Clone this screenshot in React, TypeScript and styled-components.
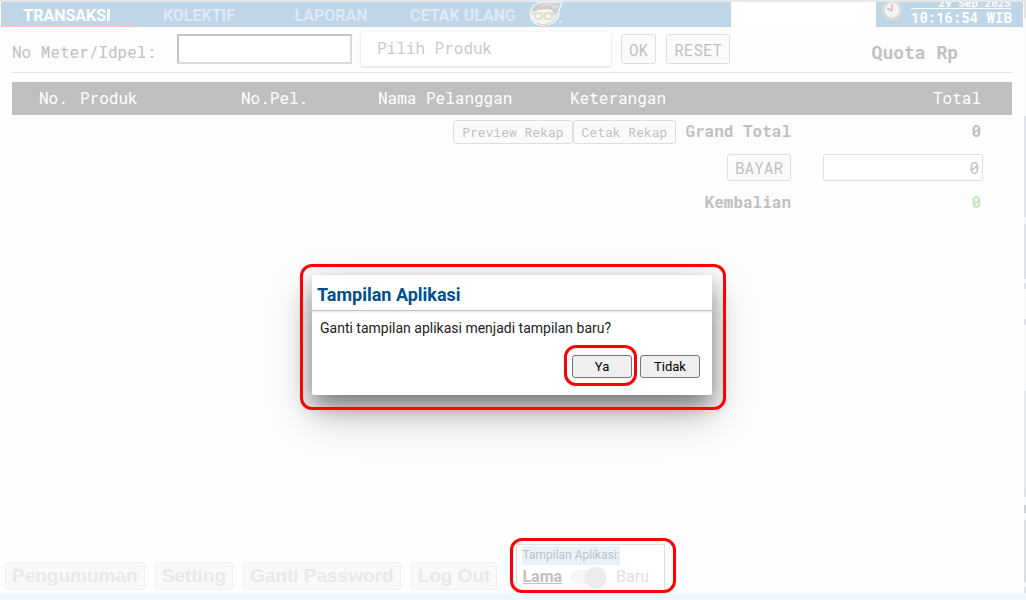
import React from "react";
import styled, { createGlobalStyle } from "styled-components";

const mono = `"Roboto Mono", "DejaVu Sans Mono", "Liberation Mono", monospace`;
const sans = `Roboto, "Liberation Sans", sans-serif`;
const ink = "#c0c0c0";
const line = "#dedede";
const blue = "#bfd5e8";

const GlobalStyle = createGlobalStyle`
  * { box-sizing: border-box; }
  body { margin: 0; background: #fdfdfd; color: ${ink}; font: 16px ${mono}; }
  button, input, select { font-family: inherit; color: inherit; margin: 0; }
`;

const Page = styled.div`
  position: relative;
  display: flex;
  min-height: 100vh;
`;

const Main = styled.div`
  flex: 1;
  min-width: 0;
  display: flex;
  flex-direction: column;
  border-top: 2px solid #e6e9eb;
  border-bottom: 7px solid #f0f8ff;
`;

const SideStrip = styled.div`
  width: 2px;
  background: linear-gradient(
    #e4e4e4 18px, #fafafa 18px 116px, #dfe3eb 116px 217px, #f6f7f9 217px 224px,
    #dde1e9 224px 279px, #f6f7f9 279px 283px, #dfe1e8 283px 289px, #f8f8f8 289px 319px,
    #dfe0e8 319px 325px, #f8f8f8 325px 391px, #e4e8ed 391px 488px, #dfe1e6 488px 497px,
    #f8f8f8 497px 505px, #ccd1d6 505px 513px, #f8f8f8 513px 520px, #d9dee3 520px 582px,
    #f6f6f6 582px 587px, #e4e4e8 587px 593px, #f0f8ff 593px
  );
`;

const TopBar = styled.header`
  display: flex;
  justify-content: space-between;
  height: 28px;
  padding: 0 1px 3px;
  background: #fff;
`;

const Tabs = styled.nav`
  display: flex;
  width: 730px;
  background: ${blue};
`;

const Tab = styled.a<{ $active?: boolean }>`
  width: 132px;
  padding-top: 2px;
  border-bottom: 2px solid ${(p) => (p.$active ? "#ffc0cb" : "transparent")};
  color: ${(p) => (p.$active ? "#fff" : "#dfe9f3")};
  font: bold 16px/24px ${sans};
  text-align: center;
  text-decoration: none;
`;

const Clock = styled.div`
  display: flex;
  gap: 8px;
  width: 147px;
  padding: 0 12px 0 5px;
  background: ${blue};
  overflow: hidden;
`;

const ClockText = styled.div`
  flex: 1;
  min-width: 0;
  display: flex;
  flex-direction: column;
  justify-content: flex-end;
  color: #fff;
  text-align: right;
  white-space: nowrap;
`;

const DateText = styled.div`
  border-bottom: 1px solid #fff;
  font: bold 11px/11px ${mono};
`;

const TimeText = styled.div`
  font: bold 14px/18px ${mono};
`;

const Content = styled.main`
  flex: 1;
  padding: 0 12px;
`;

const Filter = styled.form`
  display: flex;
  align-items: center;
  height: 43px;
  padding-bottom: 4px;
  border-bottom: 1px solid #e2e2e2;
`;

const FilterLabel = styled.label`
  width: 165px;
  padding-top: 4px;
`;

const MeterInput = styled.input`
  width: 175px;
  height: 30px;
  border: 2px solid #dadada;
  border-top-color: #c4c4c4;
  border-left-color: #c4c4c4;
  background: #fff;
  font-size: 16px;
`;

const ProductSelect = styled.select`
  appearance: none;
  width: 250px;
  height: 34px;
  margin: 0 10px 0 9px;
  padding: 0 16px 4px;
  border: 0;
  border-radius: 2px;
  background: #fff;
  box-shadow: 0 1px 3px #d8d8d8;
  color: #cacaca;
  font-size: 16px;
`;

const Button = styled.button<{ $h?: number }>`
  height: ${(p) => p.$h ?? 30}px;
  padding: 0 7px;
  border: 1px solid ${line};
  border-radius: 3px;
  background: #fbfbfb;
  font-size: 16px;
  white-space: nowrap;
`;

const SmallButton = styled(Button)`
  padding: 0 8px;
  font-size: 13px;
`;

const ResetButton = styled(Button)`
  margin-left: 10px;
`;

const Quota = styled.div`
  display: flex;
  align-items: center;
  height: 34px;
  margin-left: auto;
  font-size: 18px;
  font-weight: bold;
  padding-top: 6px;
`;

const QuotaValue = styled.span`
  width: 54px;
`;

const Sales = styled.table`
  width: 100%;
  margin-top: 9px;
  border-collapse: collapse;
  table-layout: fixed;
  background: #bfbfbf;
  color: #fff;
`;

const Th = styled.th<{ $w?: number; $left?: number; $end?: boolean }>`
  width: ${(p) => (p.$w ? p.$w + "px" : "auto")};
  height: 33px;
  padding: 0 ${(p) => (p.$end ? 31 : 0)}px 2px ${(p) => p.$left ?? 0}px;
  font-weight: normal;
  text-align: ${(p) => (p.$end ? "right" : "left")};
`;

const Totals = styled.section`
  display: grid;
  grid-template-columns: 1fr 160px;
  grid-template-rows: 33px 38px 33px;
  column-gap: 32px;
  align-items: center;
  padding-right: 29px;
  font-weight: bold;
`;

const TotalLabel = styled.div`
  display: flex;
  align-items: center;
  justify-content: flex-end;
`;

const Caption = styled.span`
  margin-left: 9px;
  padding-bottom: 2px;
`;

const Amount = styled.output<{ $green?: boolean }>`
  padding: 0 2px 2px 0;
  color: ${(p) => (p.$green ? "#bfe8bf" : ink)};
  text-align: right;
`;

const PayInput = styled.input`
  width: 100%;
  height: 27px;
  padding: 1px 3px 0;
  border: 1px solid ${line};
  border-radius: 2px;
  background: #fff;
  font-size: 16px;
  text-align: right;
`;

const Footer = styled.footer`
  display: flex;
  align-items: flex-end;
  gap: 10px;
  padding: 0 5px 3px;
`;

const MenuButton = styled.button`
  height: 28px;
  padding: 0 6px;
  border: 1px solid #f0f0f0;
  border-radius: 3px;
  background: #f9f9f9;
  color: #e9e9e9;
  font: bold 19px/24px "Liberation Sans", Arial, sans-serif;
  white-space: nowrap;
`;

const ring = `
  content: "";
  position: absolute;
  border: 3px solid #f00;
  border-radius: 12px;
  pointer-events: none;
`;

const ViewPanel = styled.div`
  position: relative;
  width: 149px;
  height: 46px;
  margin-left: 9px;
  padding: 1px 5px 0;
  border: 1px solid #e0e0e0;
  border-bottom: 0;
  background: #fff;
  font-family: ${sans};
  &::after { ${ring} inset: -7px -12px -3px -7px; }
`;

const ViewTitle = styled.div`
  width: max-content;
  background: #e9f3fe;
  font-size: 12px;
  line-height: 19px;
`;

const ViewSwitch = styled.label`
  display: flex;
  align-items: center;
  gap: 8px;
  line-height: 24px;
`;

const OldName = styled.span`
  font-weight: bold;
  text-decoration: underline;
`;

const NewName = styled.span`
  margin-left: 2px;
  color: #e0e0e0;
`;

const Toggle = styled.input`
  appearance: none;
  display: flex;
  align-items: center;
  justify-content: flex-end;
  width: 36px;
  height: 14px;
  border-radius: 7px;
  background: #f5f5f5;
  &::before {
    content: "";
    width: 20px;
    height: 20px;
    border-radius: 50%;
    background: #ececec;
    box-shadow: 0 1px 3px #dcdcdc;
  }
`;

const Overlay = styled.div`
  position: absolute;
  inset: 0;
  display: flex;
  align-items: flex-start;
  justify-content: center;
  padding: 275px 2px 0 0;
`;

const Dialog = styled.div`
  position: relative;
  width: 400px;
  min-height: 120px;
  border-radius: 2px;
  background: #fff;
  box-shadow: 0 10px 20px rgba(0, 0, 0, 0.36), 0 18px 44px rgba(0, 0, 0, 0.28);
  color: #222;
  font: 14px/20px ${sans};
  &::after { ${ring} inset: -11px -14px -15px -12px; }
`;

const DialogTitle = styled.h2`
  margin: 0;
  padding: 4px 5px 0;
  height: 36px;
  border-bottom: 1px solid #c4c4c4;
  box-shadow: 0 1px 2px #e4e4e4;
  color: #00508f;
  font-size: 18px;
  line-height: 32px;
`;

const Question = styled.p`
  margin: 0;
  padding: 7px 8px 0;
`;

const Actions = styled.div`
  display: flex;
  justify-content: flex-end;
  gap: 8px;
  padding: 17px 12px 0;
`;

const Choice = styled.button<{ $ringed?: boolean }>`
  position: relative;
  width: 60px;
  height: 23px;
  padding: 0;
  border: 1px solid #767676;
  border-radius: 3px;
  background: #efefef;
  color: #000;
  font-size: 13px;
  &::after { ${(p) => (p.$ringed ? ring + "inset: -11px -6px -9px -9px;" : "")} }
`;

const Drawing = styled.svg`
  flex: none;
`;

const Face = () => (
  <Drawing width="34" height="25" viewBox="0 0 34 25" aria-hidden="true">
    <path d="M1 12Q2 2 12 0H33L30 9Q31 18 22 22Q14 25 7 22Q1 19 1 12Z" fill="#e2e6e8" stroke="#f6f8f9" />
    <path d="M3 10Q1 18 8 21Q15 24 22 20Q28 15 25 8L13 6Z" fill="#fbf5df" />
    <path d="M3 9Q5 1 15 1H32L28 11L25 13L23 8Q14 5 4 10Z" fill="#cbcdce" />
    <path d="M12 4Q17 1 25 3M23 6L30 3" fill="none" stroke="#dcdedf" strokeWidth="2" />
    <path d="M3 12H6M13 14H16M23 13L27 11" stroke="#d2d1c6" />
    <rect x="6" y="11" width="7" height="6" rx="1" fill="#f0f4f5" stroke="#cccbc1" />
    <rect x="16" y="11" width="7" height="6" rx="1" fill="#f0f4f5" stroke="#cccbc1" />
    <path d="M8 21Q15 25 23 20" fill="none" stroke="#d5d2c6" />
    <path d="M32 19V21" stroke="#fff" />
  </Drawing>
);

const ClockFace = () => (
  <Drawing width="22" height="22" viewBox="0 0 22 22" aria-hidden="true">
    <circle cx="11" cy="8" r="9" fill="#f3f3f3" stroke="#d8d8d6" strokeWidth="3" />
    <path d="M11 9V2" stroke="#f7bfcb" strokeWidth="2" />
    <path d="M11 9L6 6" stroke="#c2c2c4" strokeWidth="2" />
  </Drawing>
);

export default function App() {
  return (
    <Page>
      <GlobalStyle />
      <Main>
        <TopBar>
          <Tabs>
            <Tab href="#transaksi" $active>TRANSAKSI</Tab>
            <Tab href="#kolektif">KOLEKTIF</Tab>
            <Tab href="#laporan">LAPORAN</Tab>
            <Tab href="#cetak">CETAK ULANG</Tab>
            <Face />
          </Tabs>
          <Clock>
            <ClockFace />
            <ClockText>
              <DateText>29 Sep 2025</DateText>
              <TimeText>10:16:54 WIB</TimeText>
            </ClockText>
          </Clock>
        </TopBar>
        <Content>
          <Filter onSubmit={(e) => e.preventDefault()}>
            <FilterLabel htmlFor="meter">No Meter/Idpel:</FilterLabel>
            <MeterInput id="meter" />
            <ProductSelect aria-label="Produk">
              <option>Pilih Produk</option>
            </ProductSelect>
            <Button type="submit">OK</Button>
            <ResetButton type="reset">RESET</ResetButton>
            <Quota>Quota Rp<QuotaValue /></Quota>
          </Filter>
          <Sales>
            <thead>
              <tr>
                <Th $w={68} $left={27}>No.</Th>
                <Th $w={161}>Produk</Th>
                <Th $w={137}>No.Pel.</Th>
                <Th $w={192}>Nama Pelanggan</Th>
                <Th $w={192}>Keterangan</Th>
                <Th $end>Total</Th>
              </tr>
            </thead>
          </Sales>
          <Totals>
            <TotalLabel>
              <SmallButton type="button" $h={24}>Preview Rekap</SmallButton>
              <SmallButton type="button" $h={24}>Cetak Rekap</SmallButton>
              <Caption>Grand Total</Caption>
            </TotalLabel>
            <Amount>0</Amount>
            <TotalLabel>
              <Button type="button" $h={27}>BAYAR</Button>
            </TotalLabel>
            <PayInput aria-label="Bayar" defaultValue="0" />
            <TotalLabel><Caption>Kembalian</Caption></TotalLabel>
            <Amount $green>0</Amount>
          </Totals>
        </Content>
        <Footer>
          <MenuButton type="button">Pengumuman</MenuButton>
          <MenuButton type="button">Setting</MenuButton>
          <MenuButton type="button">Ganti Password</MenuButton>
          <MenuButton type="button">Log Out</MenuButton>
          <ViewPanel>
            <ViewTitle>Tampilan Aplikasi:</ViewTitle>
            <ViewSwitch>
              <OldName>Lama</OldName>
              <Toggle type="checkbox" role="switch" />
              <NewName>Baru</NewName>
            </ViewSwitch>
          </ViewPanel>
        </Footer>
      </Main>
      <SideStrip />
      <Overlay>
        <Dialog role="dialog" aria-labelledby="dialog-title">
          <DialogTitle id="dialog-title">Tampilan Aplikasi</DialogTitle>
          <Question>Ganti tampilan aplikasi menjadi tampilan baru?</Question>
          <Actions>
            <Choice type="button" $ringed>Ya</Choice>
            <Choice type="button">Tidak</Choice>
          </Actions>
        </Dialog>
      </Overlay>
    </Page>
  );
}
